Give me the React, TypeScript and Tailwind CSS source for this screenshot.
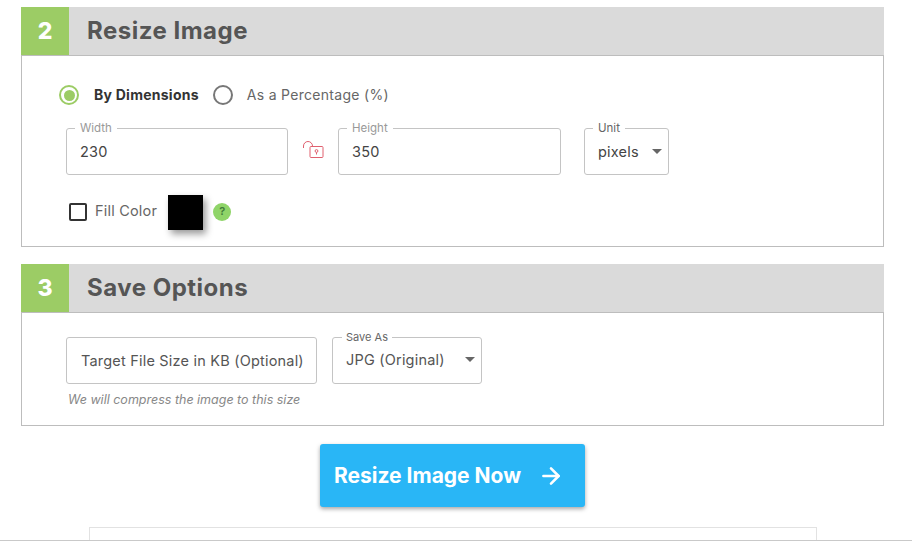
import { ArrowRight } from 'lucide-react'

function Header({ num, title }: { num: string; title: string }) {
  return (
    <div className="-mx-px flex h-[49px] border-b border-[#bdbdbd] bg-[#dadada]">
      <div className="flex w-12 items-center justify-center bg-[#9ccc65] text-[23px] font-extrabold text-white">{num}</div>
      <div className="ml-[18px] flex items-center text-[24px] leading-none font-bold tracking-[0.5px] text-[#555]">{title}</div>
    </div>
  )
}

function Field({ label, value, className, select, dark }: { label: string; value: string; className: string; select?: boolean; dark?: boolean }) {
  return (
    <fieldset className={`h-[52px] rounded-[3px] border border-[#c4c4c4] ${className}`}>
      <legend className={`-ml-[5px] px-[5px] text-[11.5px] leading-[11px] ${dark ? 'text-[#666]' : 'text-[#999]'}`}>{label}</legend>
      <div className="flex items-center justify-between pt-[7px] text-[14.5px] tracking-[0.2px] text-[#444]">
        <span>{value}</span>
        {select && <span className="h-0 w-0 border-x-[5px] border-t-[5px] border-x-transparent border-t-[#666]" />}
      </div>
    </fieldset>
  )
}

export default function App() {
  return (
    <div className="relative h-[541px] w-[912px] overflow-hidden bg-white pt-[7px] font-['Inter','Noto_Sans',sans-serif]">
      <section className="mr-[28px] ml-[21px] border-x border-b border-[#bdbdbd]">
        <Header num="2" title="Resize Image" />
        <div className="h-[190px] pt-[28px] pl-[37px]">
          <div className="flex h-[22px] items-center">
            <span className="flex h-5 w-5 items-center justify-center rounded-full border-2 border-[#9ccc65]">
              <span className="h-[11px] w-[11px] rounded-full bg-[#9ccc65]" />
            </span>
            <span className="ml-[15px] mb-[2px] text-[14px] font-bold tracking-[0.25px] text-[#333]">By Dimensions</span>
            <span className="ml-[14px] h-5 w-5 rounded-full border-2 border-[#777]" />
            <span className="ml-[14px] mb-[2px] text-[14px] tracking-[0.3px] text-[#666]">As a Percentage (%)</span>
          </div>
          <div className="mt-[17px] ml-[7px] flex items-start">
            <Field label="Width" value="230" className="w-[222px] px-[13px]" />
            <div className="flex h-[52px] w-[50px] items-center justify-center pt-[1px]">
              <svg width="22" height="20" viewBox="0 0 22 20" fill="none" stroke="#e0606f" strokeWidth="1">
                <path d="M1.5 8V6a4.5 4.5 0 0 1 9 0" />
                <rect x="8" y="6.5" width="13" height="11" rx="1" />
                <circle cx="14.5" cy="11" r="1.4" />
                <path d="M14.5 12.5v2" />
              </svg>
            </div>
            <Field label="Height" value="350" className="w-[223px] px-[13px]" />
            <Field label="Unit" value="pixels" select dark className="ml-[23px] w-[85px] pr-[6px] pl-[13px]" />
          </div>
          <div className="mt-[20px] ml-[10px] flex items-center">
            <span className="mb-[2px] h-[18px] w-[18px] rounded-[2px] border-2 border-[#333]" />
            <span className="ml-[8px] mb-[4px] text-[14.5px] tracking-[0.2px] text-[#666]">Fill Color</span>
            <span className="ml-[11px] h-[35px] w-[35px] bg-black shadow-[3px_4px_7px_rgba(0,0,0,0.4)]" />
            <span className="ml-[10px] mb-[2px] flex h-[18px] w-[18px] items-center justify-center rounded-full bg-[#8fd468] text-[11px] font-semibold text-[#3f7a3a]">?</span>
          </div>
        </div>
      </section>

      <section className="mt-[17px] mr-[28px] ml-[21px] border-x border-b border-[#bdbdbd]">
        <Header num="3" title="Save Options" />
        <div className="h-[112px] pt-[24px] pl-[44px]">
          <div className="flex items-start">
            <div className="flex h-[47px] w-[251px] items-center rounded-[3px] border border-[#c4c4c4] pl-[14px] text-[14.5px] tracking-[0.2px] whitespace-nowrap text-[#555]">
              Target File Size in KB (Optional)
            </div>
            <fieldset className="-mt-[5px] ml-[15px] h-[52px] w-[150px] rounded-[3px] border border-[#c4c4c4] pr-[6px] pl-[13px]">
              <legend className="-ml-[4px] px-[4px] text-[11px] leading-[11px] text-[#666]">Save As</legend>
              <div className="flex items-center justify-between pt-[6px] text-[14.5px] tracking-[0.2px] text-[#555]">
                <span>JPG (Original)</span>
                <span className="h-0 w-0 border-x-[5px] border-t-[5px] border-x-transparent border-t-[#666]" />
              </div>
            </fieldset>
          </div>
          <div className="mt-[7px] ml-[2px] text-[12.5px] text-[#888] italic">We will compress the image to this size</div>
        </div>
      </section>

      <div className="mt-[18px] flex justify-center pr-[7px]">
        <button className="flex h-[63px] w-[265px] items-center gap-[17px] rounded-[3px] bg-[#29b6f6] pl-[14px] text-[21px] font-bold text-white shadow-[0_2px_4px_rgba(0,0,0,0.35)]">
          Resize Image Now
          <ArrowRight size={26} strokeWidth={2.4} />
        </button>
      </div>

      <div className="mt-[20px] ml-[89px] h-[30px] w-[728px] border border-[#e2e2e2]" />
      <div className="absolute inset-x-0 bottom-0 h-px bg-[#c9c9c9]" />
    </div>
  )
}
